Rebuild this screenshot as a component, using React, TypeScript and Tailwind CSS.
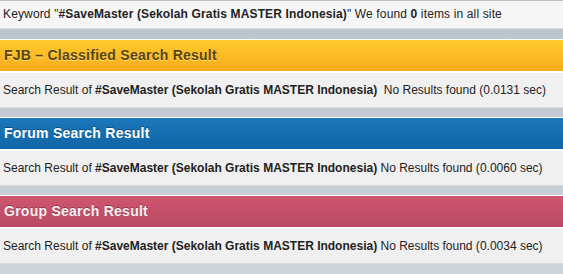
import React from 'react';

interface Section {
  title: string;
  time: string;
  head: string;
  titleCls: string;
  gap: string;
  mt: string;
}

const sections: Section[] = [
  {
    title: 'FJB \u2013 Classified Search Result',
    time: '0.0131',
    head: 'bg-gradient-to-b from-[#ffcb2c] to-[#f8ab1c] border-b-2 border-[#cf8212]',
    titleCls: 'text-[#5a4412] [text-shadow:0_1px_0_rgba(255,235,160,0.7)]',
    gap: '\u00a0 ',
    mt: 'mt-[10px]',
  },
  {
    title: 'Forum Search Result',
    time: '0.0060',
    head: 'bg-gradient-to-b from-[#1b78ba] to-[#0f65a6] border-b-2 border-[#0b4878]',
    titleCls: 'text-white [text-shadow:0_-1px_0_rgba(0,0,0,0.35)]',
    gap: ' ',
    mt: 'mt-[9px]',
  },
  {
    title: 'Group Search Result',
    time: '0.0034',
    head: 'bg-gradient-to-b from-[#d0576f] to-[#b74864] border-b-2 border-[#8e3a50]',
    titleCls: 'text-[#f6eef0] [text-shadow:0_-1px_0_rgba(0,0,0,0.3)]',
    gap: ' ',
    mt: 'mt-[9px]',
  },
];

const keyword = '#SaveMaster (Sekolah Gratis MASTER Indonesia)';

export default function App() {
  return (
    <div className="w-[563px] h-[274px] overflow-hidden bg-gradient-to-b from-[#b9c3cb] to-[#cdd4da] font-['Liberation_Sans',Arial,sans-serif] text-[12px] text-[#222]">
      <div className="mt-[1px] h-[28px] bg-[#f6f6f6] border-b border-[#d9dde0] flex items-center pl-[3px] pb-[1px]">
        <span className="tracking-[0.14px]">
          Keyword "<b>{keyword}</b>" We found <b>0</b> items in all site
        </span>
      </div>

      {sections.map((s) => (
        <div key={s.title} className={s.mt}>
          <div className={`h-[34px] border-t border-white flex items-center pl-[4px] ${s.head}`}>
            <span className={`text-[14px] font-bold tracking-[0.25px] ${s.titleCls}`}>{s.title}</span>
          </div>
          <div className="h-[35px] bg-[#f1f0f0] border-b border-[#dcdcdc] flex items-center pl-[3px]">
            <span>
              Search Result of <b>{keyword}</b>{s.gap}No Results found ({s.time} sec)
            </span>
          </div>
        </div>
      ))}
    </div>
  );
}
